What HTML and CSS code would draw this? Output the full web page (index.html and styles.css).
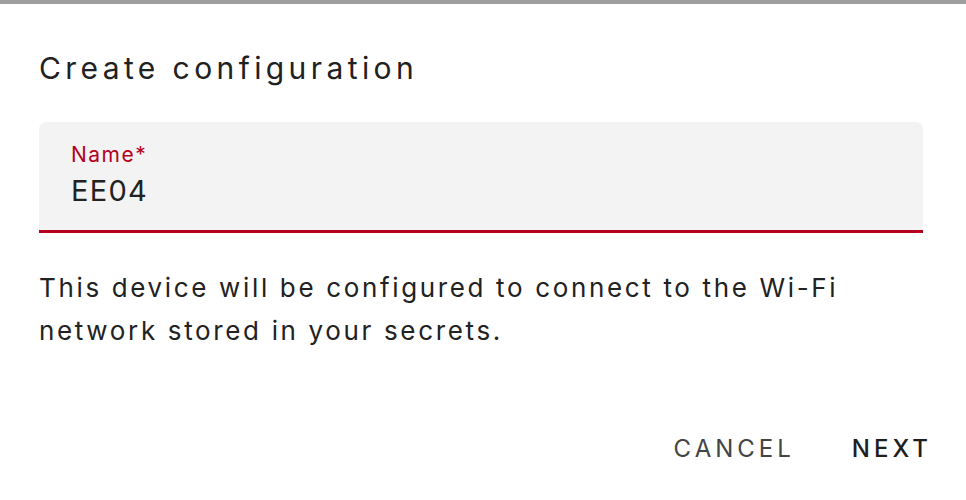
FILE: index.html
```html
<!DOCTYPE html>
<html lang="en">
<head>
<meta charset="utf-8">
<link rel="stylesheet" href="styles.css">
</head>
<body>
<div class="topbar"></div>
<div class="dialog">
  <h2 class="title">Create configuration</h2>
  <div class="field">
    <div class="label">Name*</div>
    <div class="value">EE04</div>
  </div>
  <p class="desc">This device will be configured to connect to the Wi-Fi network stored in your secrets.</p>
  <div class="actions">
    <button class="btn cancel">Cancel</button>
    <button class="btn next">Next</button>
  </div>
</div>
</body>
</html>
```

FILE: styles.css
```css
html, body {
  margin: 0;
  padding: 0;
  background: #ffffff;
}
body {
  width: 966px;
  height: 500px;
  overflow: hidden;
  font-family: Inter, Roboto, sans-serif;
  color: #212121;
}
.topbar {
  height: 4px;
  background: #9e9e9e;
}
.dialog {
  padding: 0 43px 0 39px;
}
.title {
  margin: 44px 0 0;
  font-size: 30px;
  line-height: 40px;
  font-weight: 400;
  letter-spacing: 4.4px;
  color: #212121;
}
.field {
  margin-top: 34px;
  height: 108px;
  background: #f3f3f3;
  border-radius: 7px 7px 0 0;
  border-bottom: 3px solid #b5001f;
  padding: 0 32px;
  box-sizing: content-box;
}
.label {
  padding-top: 19px;
  font-size: 21px;
  line-height: 28px;
  letter-spacing: 1.5px;
  color: #b5001f;
}
.value {
  margin-top: 2px;
  font-size: 29px;
  line-height: 40px;
  letter-spacing: 1.3px;
  color: #222;
}
.desc {
  margin: 33px 0 0;
  font-size: 26px;
  line-height: 43px;
  letter-spacing: 2.65px;
  color: #222;
}
.actions {
  display: flex;
  justify-content: flex-end;
  gap: 57px;
  margin-top: 79px;
  margin-right: -9px;
}
.btn {
  background: none;
  border: none;
  padding: 0;
  font-family: inherit;
  text-transform: uppercase;
  font-size: 24px;
  letter-spacing: 4px;
  line-height: 36px;
  font-weight: 400;
}
.cancel { color: #444; }
.next { color: #1e1e1e; font-weight: 500; }
```
